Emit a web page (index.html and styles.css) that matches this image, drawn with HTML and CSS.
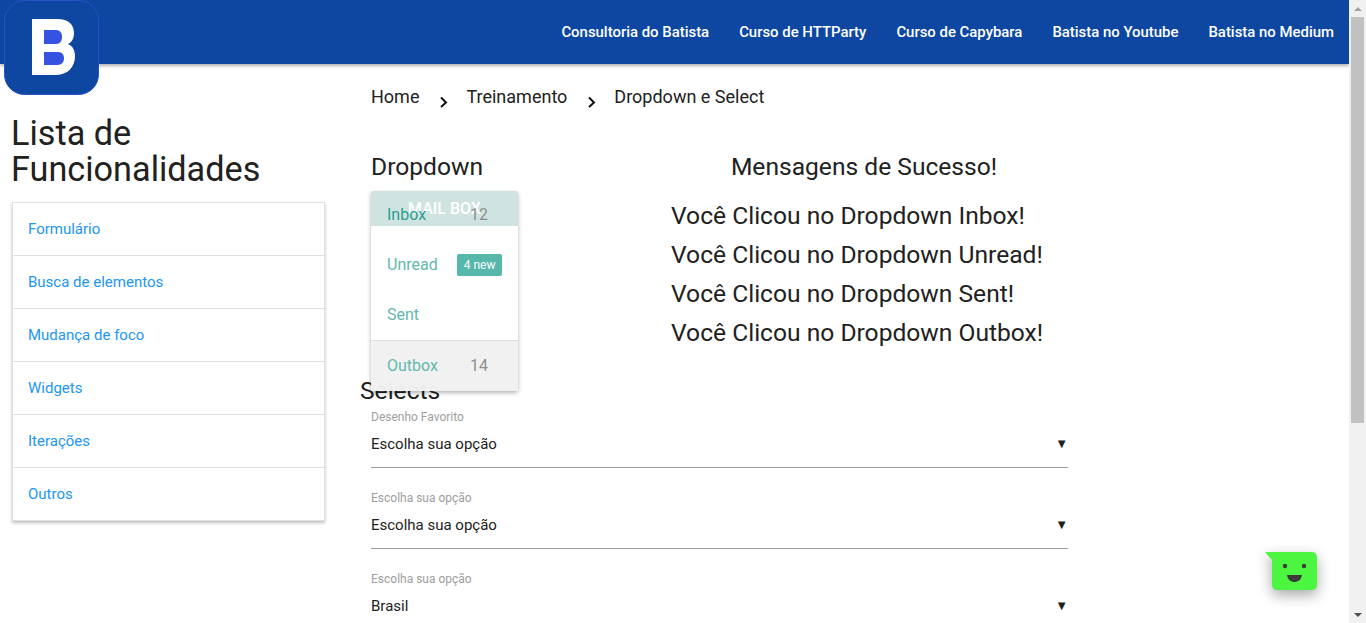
FILE: index.html
```html
<!DOCTYPE html>
<html lang="en">
<head>
    <meta charset="UTF-8">
    <meta name="viewport" content="width=device-width, initial-scale=1.0">
    <title>Dropdown e Select</title>
    <link rel="stylesheet" href="styles.css">
</head>
<body>
    <div class="page">
        <!-- Top bar -->
        <header class="topbar">
            <a class="logo" href="#">
                <svg width="95" height="95" viewBox="0 0 95 95">
                    <rect x="0.5" y="0.5" width="94" height="94" rx="20" fill="#0d47a1" stroke="#2a50c8"/>
                    <path d="M28 19H53C65 19 70 25 70 33C70 38 68 42 64 44C69 46 71 51 71 56C71 67 64 75 51 75H28Z" fill="#fff"/>
                    <path d="M40 30H52C57 30 58 34 58 37C58 41 56 44 52 44H40Z" fill="#3652e0"/>
                    <path d="M40 52H54C58 52 60 55 60 58C60 62 58 65 53 65H40Z" fill="#3652e0"/>
                </svg>
            </a>
            <nav class="topnav">
                <a href="#">Consultoria do Batista</a>
                <a href="#">Curso de HTTParty</a>
                <a href="#">Curso de Capybara</a>
                <a href="#">Batista no Youtube</a>
                <a href="#">Batista no Medium</a>
            </nav>
        </header>

        <div class="content">
            <!-- Sidebar -->
            <aside class="sidebar">
                <h1>Lista de Funcionalidades</h1>
                <ul class="collection">
                    <li><a href="#">Formulário</a></li>
                    <li><a href="#">Busca de elementos</a></li>
                    <li><a href="#">Mudança de foco</a></li>
                    <li><a href="#">Widgets</a></li>
                    <li><a href="#">Iterações</a></li>
                    <li><a href="#">Outros</a></li>
                </ul>
            </aside>

            <main class="main">
                <div class="breadcrumb">
                    <a href="#">Home</a>
                    <svg class="crumb-arrow" width="10" height="12" viewBox="0 0 10 12"><path d="M2 1.5L7 6.5L2 11" fill="none" stroke="#111" stroke-width="2"/></svg>
                    <a href="#">Treinamento</a>
                    <svg class="crumb-arrow" width="10" height="12" viewBox="0 0 10 12"><path d="M2 1.5L7 6.5L2 11" fill="none" stroke="#111" stroke-width="2"/></svg>
                    <a href="#">Dropdown e Select</a>
                </div>

                <section class="top-row">
                    <div class="dropdown-col">
                        <h2>Dropdown</h2>
                    </div>
                    <div class="messages">
                        <h2>Mensagens de Sucesso!</h2>
                        <p>Você Clicou no Dropdown Inbox!</p>
                        <p>Você Clicou no Dropdown Unread!</p>
                        <p>Você Clicou no Dropdown Sent!</p>
                        <p>Você Clicou no Dropdown Outbox!</p>
                    </div>
                </section>

                <section class="selects">
                    <h2>Selects</h2>
                    <div class="field">
                        <label>Desenho Favorito</label>
                        <div class="select-box"><span>Escolha sua opção</span><i>▼</i></div>
                    </div>
                    <div class="field">
                        <label>Escolha sua opção</label>
                        <div class="select-box"><span>Escolha sua opção</span><i>▼</i></div>
                    </div>
                    <div class="field">
                        <label>Escolha sua opção</label>
                        <div class="select-box"><span>Brasil</span><i>▼</i></div>
                    </div>
                </section>

                <!-- Open menu, lies over the Selects title -->
                <div class="mailbox">
                    <div class="mailbox-title">MAIL BOX</div>
                    <div class="mailbox-row mailbox-first"><span>Inbox</span><b>12</b></div>
                    <div class="mailbox-row"><span>Unread</span><em>4 new</em></div>
                    <div class="mailbox-row"><span>Sent</span></div>
                    <div class="mailbox-row mailbox-last"><span>Outbox</span><b>14</b></div>
                </div>
            </main>
        </div>

        <!-- Chat bot -->
        <div class="bot">
            <svg width="60" height="50" viewBox="0 0 60 50">
                <path d="M0 0H46C50 0 52 2 52 6V32C52 36 50 38 46 38H13C9 38 7 36 7 32V8Z" fill="#4cf53f"/>
                <circle cx="20" cy="14" r="2.2" fill="#3a3a3a"/>
                <circle cx="39" cy="14" r="2.2" fill="#3a3a3a"/>
                <path d="M22 23H37C36 28 33 30 29.500 30C26 30 23 28 22 23Z" fill="#3a3a3a"/>
            </svg>
        </div>
    </div>

    <!-- Scrollbar as in the screenshot -->
    <div class="scrollbar">
        <div class="scroll-btn"><span class="arrow-up"></span></div>
        <div class="scroll-track"><div class="scroll-thumb"></div></div>
        <div class="scroll-btn"><span class="arrow-down"></span></div>
    </div>
</body>
</html>
```

FILE: styles.css
```css
/* Basic Reset */
* {
    margin: 0;
    padding: 0;
    box-sizing: border-box;
}

html,
body {
    height: 623px;
    overflow: hidden;
}

body {
    display: flex;
    font-family: 'Roboto', sans-serif;
    color: #212121;
    background-color: #fff;
}

a {
    text-decoration: none;
}

h1,
h2 {
    font-weight: 400;
}

.page {
    position: relative;
    flex: 1;
    min-width: 0;
    height: 623px;
    overflow: hidden;
}

/* Top bar */
.topbar {
    display: flex;
    justify-content: flex-end;
    height: 64px;
    background-color: #0d47a1;
    box-shadow: 0 2px 3px rgba(0, 0, 0, 0.3);
}

.logo {
    position: absolute;
    top: 0;
    left: 4px;
    width: 95px;
    height: 95px;
    z-index: 2;
}

.topnav {
    display: flex;
    align-items: center;
}

.topnav a {
    padding: 0 15px;
    color: #fff;
    font-size: 14.92px;
    font-weight: 500;
    white-space: nowrap;
}

/* Layout */
.content {
    display: flex;
}

.sidebar {
    flex: 0 0 337px;
    padding: 51px 11px 0 12px;
}

.sidebar h1 {
    font-size: 34.24px;
    line-height: 36.400px;
    margin: 0 0 14px -1px;
}

.collection {
    list-style: none;
    width: 313px;
    border: 1px solid #e0e0e0;
    background-color: #fff;
    box-shadow: 0 2px 3px rgba(0, 0, 0, 0.25);
}

.collection li {
    height: 53px;
    border-bottom: 1px solid #e0e0e0;
    padding-left: 15px;
    line-height: 53px;
    font-size: 15px;
}

.collection li:last-child {
    height: 52px;
    border-bottom: none;
}

.collection a {
    color: #2196f3;
}

.main {
    position: relative;
    flex: 1;
    padding: 20px 0 0 34px;
}

/* Breadcrumb */
.breadcrumb {
    display: flex;
    align-items: center;
    height: 24px;
    font-size: 18px;
    margin-bottom: 45px;
}

.breadcrumb a {
    color: #212121;
}

.crumb-arrow {
    margin: 12px 17px 0 20px;
}

/* Dropdown and messages */
.top-row {
    display: flex;
    height: 224px;
}

.top-row h2 {
    font-size: 24.6px;
    line-height: 28px;
}

.dropdown-col {
    width: 300px;
}

.messages {
    width: 386px;
}

.messages h2 {
    text-align: center;
    margin-bottom: 15px;
}

.messages p {
    font-size: 24.6px;
    line-height: 39px;
}

/* Open menu */
.mailbox {
    position: absolute;
    top: 127px;
    left: 34px;
    width: 147px;
    height: 200px;
    background-color: rgba(255, 255, 255, 0.85);
    border-radius: 2px;
    box-shadow: 0 2px 4px rgba(0, 0, 0, 0.3);
}

.mailbox-title {
    position: absolute;
    top: 0;
    left: 0;
    width: 100%;
    height: 35px;
    background-color: #cfe4e1;
    border-radius: 2px 2px 0 0;
    color: #fff;
    font-size: 16px;
    font-weight: 500;
    line-height: 35px;
    text-align: center;
}

.mailbox-row {
    position: relative;
    display: flex;
    justify-content: space-between;
    align-items: center;
    height: 50px;
    padding: 0 16px 2px;
    font-size: 16px;
    color: #62b9ae;
}

.mailbox-first {
    height: 49px;
    padding-bottom: 3px;
    color: #2b9c90;
}

.mailbox-row b {
    width: 46px;
    font-weight: 400;
    color: #8f8f8f;
    text-align: center;
}

.mailbox-row em {
    margin-top: 2px;
    padding: 0 6.5px;
    font-style: normal;
    font-size: 12px;
    line-height: 22px;
    color: #fff;
    background-color: #56b8aa;
    border-radius: 2px;
}

.mailbox-last {
    height: 51px;
    background-color: rgba(238, 238, 238, 0.85);
    border-top: 1px solid #e0e0e0;
}

/* Selects */
.selects h2 {
    font-size: 24.6px;
    line-height: 28px;
    margin-left: -11px;
}

.field {
    width: 697px;
    margin-bottom: 23px;
}

.field label {
    display: block;
    margin-top: 5px;
    font-size: 12px;
    line-height: 14px;
    color: #9e9e9e;
}

.field + .field label {
    margin-top: 0;
}

.select-box {
    display: flex;
    justify-content: space-between;
    align-items: center;
    height: 44px;
    padding-bottom: 3px;
    border-bottom: 1px solid #9e9e9e;
    font-size: 15px;
}

.select-box i {
    margin-bottom: 2px;
    font-style: normal;
    font-size: 13px;
}

/* Chat bot */
.bot {
    position: absolute;
    left: 1265px;
    top: 552px;
    width: 60px;
    height: 50px;
    z-index: 3;
}

.bot svg {
    filter: drop-shadow(0 5px 7px rgba(0, 0, 0, 0.35));
    overflow: visible;
}

/* Scrollbar */
.scrollbar {
    display: flex;
    flex-direction: column;
    flex: 0 0 17px;
    height: 623px;
    background-color: #f1f1f1;
}

.scroll-btn {
    display: flex;
    justify-content: center;
    align-items: center;
    height: 17px;
}

.arrow-up {
    border-left: 4px solid transparent;
    border-right: 4px solid transparent;
    border-bottom: 4px solid #a3a3a3;
}

.arrow-down {
    border-left: 4px solid transparent;
    border-right: 4px solid transparent;
    border-top: 4px solid #505050;
}

.scroll-track {
    flex: 1;
    padding: 0 2px 0 2px;
}

.scroll-thumb {
    height: 406px;
    background-color: #c1c1c1;
}
```
